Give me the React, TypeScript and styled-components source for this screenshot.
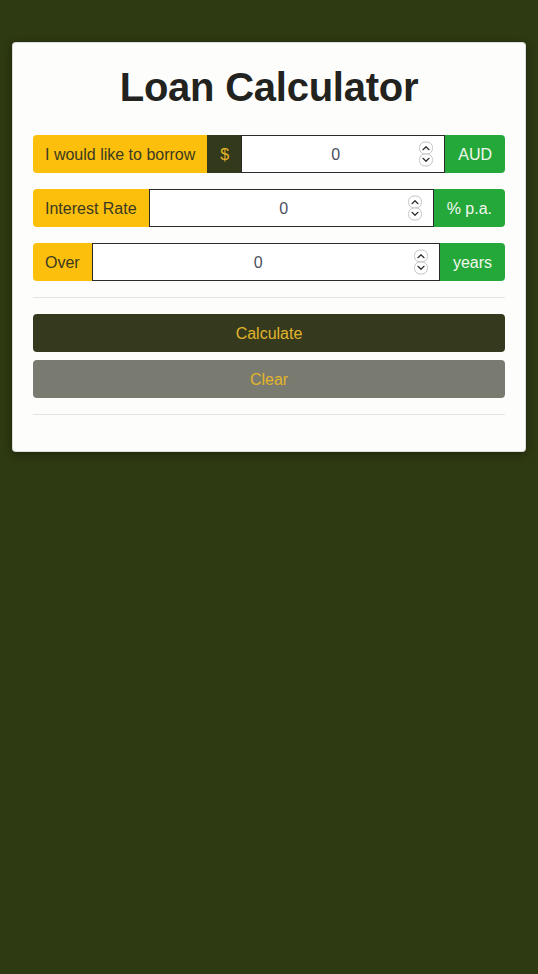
import React from "react";
import styled, { createGlobalStyle } from "styled-components";

const GlobalStyle = createGlobalStyle`
  html, body {
    margin: 0;
    padding: 0;
    background: #2e3a12;
    font-family: "Liberation Sans", Arial, sans-serif;
  }
  * { box-sizing: border-box; }
`;

const Page = styled.div`
  padding: 42px 12px;
  min-height: 974px;
`;

const Card = styled.div`
  background: #fdfdfb;
  border: 1px solid rgba(0, 0, 0, 0.125);
  border-radius: 4px;
  padding: 18px 20px 20px;
  box-shadow: 0 2px 10px rgba(0, 0, 0, 0.35);
`;

const Title = styled.h1`
  margin: 0 0 24px;
  padding-top: 2px;
  text-align: center;
  font-size: 40px;
  line-height: 48px;
  font-weight: 700;
  letter-spacing: -0.25px;
  color: #22231e;
`;

const Group = styled.div`
  display: flex;
  height: 38px;
  margin-bottom: 16px;
  &:last-of-type { margin-bottom: 0; }
`;

const Addon = styled.span<{ $variant: "label" | "dark" | "green" }>`
  display: flex;
  align-items: center;
  padding: 2px 12px 0;
  font-size: 16px;
  white-space: nowrap;
  border: 0 solid transparent;
  border-left-width: ${(p) => (p.$variant === "label" ? 0 : 1)}px;
  border-right-width: ${(p) => (p.$variant === "green" ? 1 : 0)}px;
  background: ${(p) =>
    p.$variant === "label" ? "#fcbf0b" : p.$variant === "dark" ? "#333a1c" : "#25a83a"};
  color: ${(p) =>
    p.$variant === "label" ? "#3a3a24" : p.$variant === "dark" ? "#e6b42a" : "#f2f7ee"};
  border-radius: ${(p) =>
    p.$variant === "label" ? "4px 0 0 4px" : p.$variant === "green" ? "0 4px 4px 0" : "0"};
`;

const Field = styled.div`
  position: relative;
  flex: 1;
  min-width: 0;
  display: flex;
`;

const NumberInput = styled.input`
  flex: 1;
  min-width: 0;
  height: 38px;
  border: 1px solid #2a2a2a;
  background: #fff;
  text-align: center;
  font-family: "Liberation Sans", Arial, sans-serif;
  font-size: 16px;
  color: #4a5160;
  padding: 2px 27px 0 12px;
  outline: none;
  appearance: textfield;
  -moz-appearance: textfield;
  &::-webkit-inner-spin-button,
  &::-webkit-outer-spin-button {
    -webkit-appearance: none;
    display: none;
    margin: 0;
  }
`;

const Spinner = styled.div`
  position: absolute;
  right: 12px;
  top: 50%;
  transform: translateY(-50%);
  display: flex;
  flex-direction: column;
  pointer-events: none;
`;

const SpinBox = styled.span`
  display: flex;
  align-items: center;
  justify-content: center;
  width: 14px;
  height: 13px;
  border: 1px solid #c4c4c4;
  border-radius: 6px;
  background: #fff;
  & + & { margin-top: -1px; }
`;

const Divider = styled.hr`
  border: 0;
  border-top: 1px solid rgba(0, 0, 0, 0.1);
  margin: 16px 0;
`;

const Button = styled.button<{ $kind: "primary" | "secondary" }>`
  display: block;
  width: 100%;
  height: 38px;
  padding: 2px 12px 0;
  border: 0;
  border-radius: 4px;
  font-family: "Liberation Sans", Arial, sans-serif;
  font-size: 16px;
  color: #e2b42c;
  background: ${(p) => (p.$kind === "primary" ? "#353a1e" : "#7a7b70")};
  & + & { margin-top: 8px; }
`;

const Chevron = ({ up }: { up?: boolean }) => (
  <svg width="8" height="5" viewBox="0 0 8 5" fill="none">
    <path
      d={up ? "M1 4.2 L4 1.2 L7 4.2" : "M1 0.8 L4 3.8 L7 0.8"}
      stroke="#333"
      strokeWidth="1.3"
      strokeLinecap="round"
      strokeLinejoin="round"
    />
  </svg>
);

const NumberField = () => (
  <Field>
    <NumberInput type="number" defaultValue={0} />
    <Spinner>
      <SpinBox>
        <Chevron up />
      </SpinBox>
      <SpinBox>
        <Chevron />
      </SpinBox>
    </Spinner>
  </Field>
);

export default function App() {
  return (
    <>
      <GlobalStyle />
      <Page>
        <Card>
          <Title>Loan Calculator</Title>
          <div>
            <Group>
              <Addon $variant="label">I would like to borrow</Addon>
              <Addon $variant="dark">$</Addon>
              <NumberField />
              <Addon $variant="green">AUD</Addon>
            </Group>
            <Group>
              <Addon $variant="label">Interest Rate</Addon>
              <NumberField />
              <Addon $variant="green">% p.a.</Addon>
            </Group>
            <Group>
              <Addon $variant="label">Over</Addon>
              <NumberField />
              <Addon $variant="green">years</Addon>
            </Group>
          </div>
          <Divider />
          <Button $kind="primary">Calculate</Button>
          <Button $kind="secondary">Clear</Button>
          <Divider />
        </Card>
      </Page>
    </>
  );
}
